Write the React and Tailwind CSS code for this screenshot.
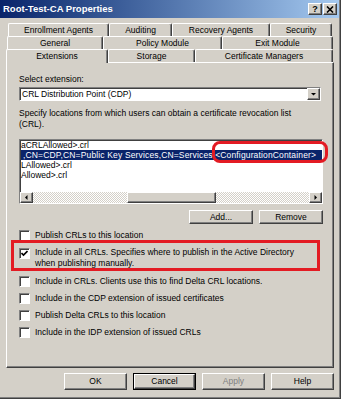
import React from "react";

const raised =
  "border-t border-l border-r border-b border-t-white border-l-white border-r-[#404040] border-b-[#404040] shadow-[inset_-1px_-1px_#808080] bg-[#d4d0c8]";
const sunken =
  "border-t border-l border-r border-b border-t-[#808080] border-l-[#808080] border-r-white border-b-white shadow-[inset_1px_1px_#404040]";

const Tab = ({ label, w, active }) => (
  <div
    className={`${w} ${
      active ? "h-[14px] relative z-10" : "h-[13px]"
    } flex items-center justify-center rounded-t-[2px] border-t border-l border-r border-t-white border-l-white border-r-[#404040] shadow-[inset_-1px_0_#808080] bg-[#d4d0c8] leading-none`}
  >
    {label}
  </div>
);

const Checkbox = ({ checked }) => (
  <div className={`w-[11px] h-[11px] shrink-0 bg-white ${sunken} flex items-center justify-center`}>
    {checked && (
      <svg width="7" height="7" viewBox="0 0 7 7">
        <path d="M0.5 3 L2.5 5 L6.5 1" stroke="#000" strokeWidth="1.6" fill="none" />
      </svg>
    )}
  </div>
);

const CheckRow = ({ label }) => (
  <div className="h-[17px] flex items-center">
    <Checkbox />
    <span className="ml-[5px]">{label}</span>
  </div>
);

const Arrow = ({ dir }) => (
  <svg width="7" height="7" viewBox="0 0 7 7">
    {dir === "down" && <path d="M1 2 H6 L3.5 4.5 Z" fill="#000" />}
    {dir === "left" && <path d="M4.5 1 V6 L2 3.5 Z" fill="#000" />}
    {dir === "right" && <path d="M2.5 1 V6 L5 3.5 Z" fill="#000" />}
  </svg>
);

const track =
  "bg-[repeating-conic-gradient(#d4d0c8_0%_25%,#ffffff_0%_50%)] bg-[length:2px_2px]";

export default function App() {
  return (
    <div className="w-[343px] h-[400px] bg-white font-['Liberation_Sans',Arial,sans-serif] text-[8.5px] text-black">
      <div className="w-[341px] h-[399px] bg-[#d4d0c8] flex flex-col shadow-[inset_-1px_-1px_#404040,inset_-2px_-2px_#808080]">
        {/* Title bar */}
        <div className="h-[18px] mr-[2px] flex items-center justify-between pl-[3px] pr-[2px] bg-gradient-to-r from-[#0a246a] to-[#a6caf0]">
          <span className="text-white font-bold text-[9.5px]">Root-Test-CA Properties</span>
          <div className="flex gap-[1px]">
            <div className={`w-[14px] h-[12px] ${raised} flex items-center justify-center font-bold text-[9px] leading-none`}>?</div>
            <div className={`w-[14px] h-[12px] ${raised} flex items-center justify-center`}>
              <svg width="8" height="7" viewBox="0 0 8 7">
                <path d="M1 0.5 L7 6.5 M7 0.5 L1 6.5" stroke="#000" strokeWidth="1.6" />
              </svg>
            </div>
          </div>
        </div>

        {/* Tabs */}
        <div className="mt-[5px] flex flex-col">
          <div className="ml-[8px] flex">
            <Tab label="Enrollment Agents" w="w-[101px]" />
            <Tab label="Auditing" w="w-[63px]" />
            <Tab label="Recovery Agents" w="w-[98px]" />
            <Tab label="Security" w="w-[62px]" />
          </div>
          <div className="ml-[7px] flex">
            <Tab label="General" w="w-[96px]" />
            <Tab label="Policy Module" w="w-[119px]" />
            <Tab label="Exit Module" w="w-[111px]" />
          </div>
          <div className="ml-[6px] flex h-[13px]">
            <Tab label="Extensions" w="w-[102px]" active />
            <Tab label="Storage" w="w-[87px]" />
            <Tab label="Certificate Managers" w="w-[138px]" />
          </div>
        </div>

        {/* Panel */}
        <div className="ml-[6px] w-[328px] h-[306px] border-t border-l border-r border-b border-t-white border-l-white border-r-[#404040] border-b-[#404040] shadow-[inset_-1px_-1px_#808080] flex flex-col pl-[12px]">
          <div className="mt-[11px] h-[11px] leading-[11px]">Select extension:</div>
          <div className={`mt-[2px] w-[302px] h-[14px] bg-white ${sunken} flex items-center justify-between`}>
            <span className="pl-[2px]">CRL Distribution Point (CDP)</span>
            <div className={`w-[13px] h-[12px] ${raised} flex items-center justify-center`}>
              <Arrow dir="down" />
            </div>
          </div>
          <div className="mt-[7px] leading-[11px]">
            Specify locations from which users can obtain a certificate revocation list
            <br />
            (CRL).
          </div>

          {/* List box */}
          <div className={`mt-[9px] w-[304px] h-[65px] bg-white ${sunken} relative flex flex-col`}>
            <div className="flex-1 pl-[1px] leading-[10px] whitespace-nowrap">
              <div className="h-[10px]">aCRLAllowed&gt;.crl</div>
              <div className="h-[10px] bg-[#0a246a] text-white pl-[2px] tracking-[0.15px]">
                ,CN=CDP,CN=Public Key Services,CN=Services,&lt;ConfigurationContainer&gt;
              </div>
              <div className="h-[10px]">LAllowed&gt;.crl</div>
              <div className="h-[10px]">Allowed&gt;.crl</div>
            </div>
            <div className="h-[11px] flex">
              <div className={`w-[13px] ${raised} flex items-center justify-center`}>
                <Arrow dir="left" />
              </div>
              <div className={`w-[94px] ${track}`} />
              <div className={`w-[89px] ${raised}`} />
              <div className={`flex-1 ${track}`} />
              <div className={`w-[13px] ${raised} flex items-center justify-center`}>
                <Arrow dir="right" />
              </div>
            </div>
            {/* annotation */}
            <div className="absolute left-[192px] top-[1px] w-[116px] h-[22px] rounded-[8px] border-[3px] border-[#e31b23]" />
          </div>

          <div className="mt-[6px] w-[304px] flex justify-end gap-[6px]">
            <div className={`w-[64px] h-[14px] ${raised} flex items-center justify-center`}>Add...</div>
            <div className={`w-[64px] h-[14px] ${raised} flex items-center justify-center`}>Remove</div>
          </div>

          <div className="mt-[6px] h-[11px] flex items-center">
            <Checkbox />
            <span className="ml-[5px]">Publish CRLs to this location</span>
          </div>

          <div className="mt-[-1px] ml-[-8px] w-[309px] h-[31px] border-[3px] border-[#e31b23] pl-[5px] pt-[4px] flex items-start">
            <div className="mt-[1px]">
              <Checkbox checked />
            </div>
            <div className="ml-[5px] leading-[11px]">
              Include in all CRLs. Specifies where to publish in the Active Directory
              <br />
              when publishing manually.
            </div>
          </div>

          <div className="mt-[2px] flex flex-col">
            <CheckRow label="Include in CRLs. Clients use this to find Delta CRL locations." />
            <CheckRow label="Include in the CDP extension of issued certificates" />
            <CheckRow label="Publish Delta CRLs to this location" />
            <CheckRow label="Include in the IDP extension of issued CRLs" />
          </div>
        </div>

        {/* Dialog buttons */}
        <div className="mt-[5px] flex justify-end pr-[7px] gap-[6px]">
          <div className={`w-[63px] h-[17px] ${raised} flex items-center justify-center`}>OK</div>
          <div className="w-[63px] h-[17px] border border-black">
            <div className={`w-full h-full ${raised} flex items-center justify-center`}>Cancel</div>
          </div>
          <div className={`w-[63px] h-[17px] ${raised} flex items-center justify-center text-[#808080]`}>Apply</div>
          <div className={`w-[63px] h-[17px] ${raised} flex items-center justify-center`}>Help</div>
        </div>
      </div>
    </div>
  );
}
